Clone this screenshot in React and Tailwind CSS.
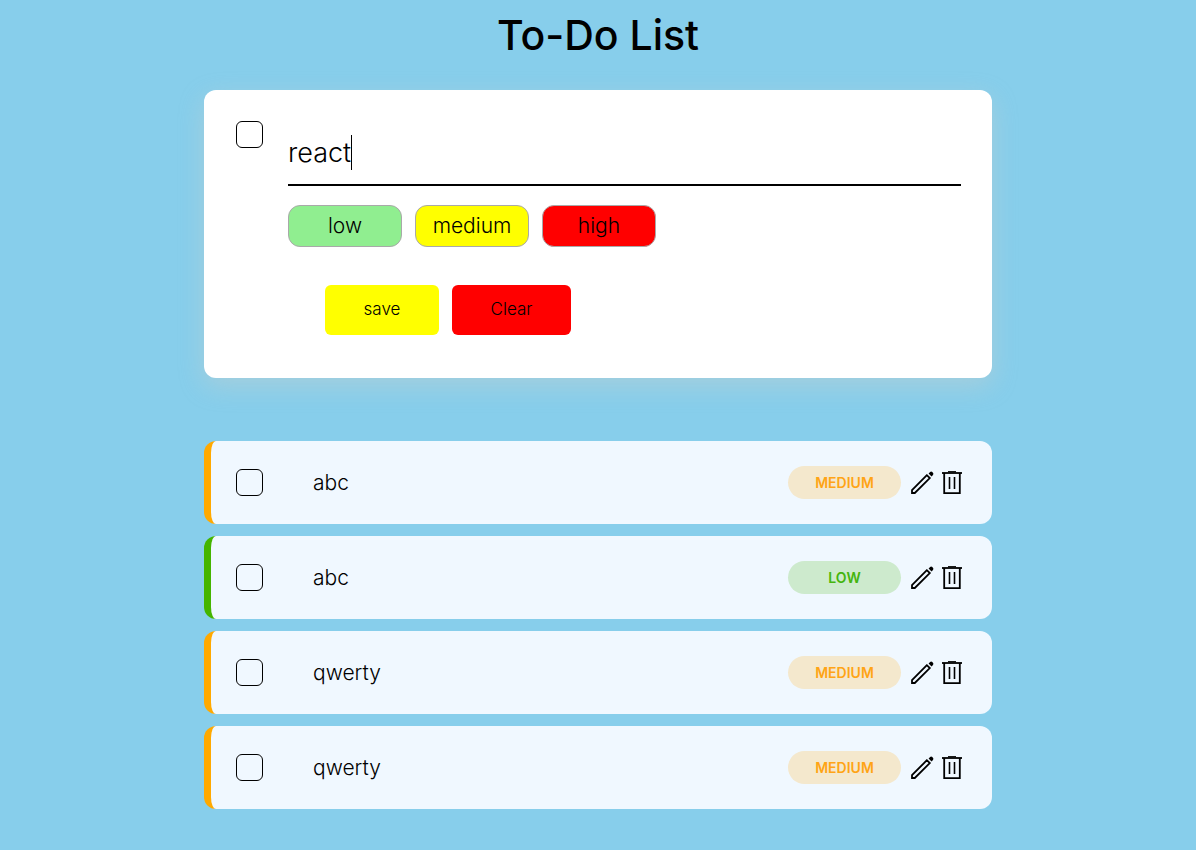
import { useState } from "react";

const tasks = [
  { id: 1, text: "abc", level: "medium" },
  { id: 2, text: "abc", level: "low" },
  { id: 3, text: "qwerty", level: "medium" },
  { id: 4, text: "qwerty", level: "medium" },
];

const borders = { medium: "border-[#ffa900]", low: "border-[#45b500]" };
const badges = {
  medium: "bg-[#f4e8cd] text-[#ffa415]",
  low: "bg-[#cdeacd] text-[#45b50e]",
};

function PencilIcon() {
  return (
    <svg width="24" height="24" viewBox="0 0 24 24" aria-hidden="true">
      <path d="M16.9 4.2 2 19.2V22H4.8L19.8 7.1Z" fill="none" stroke="#000" strokeWidth="1.8" />
      <path d="M18.6 2.5 20.1 1Q21.2 0.1 22.3 1.1L22.9 1.7Q23.9 2.8 23 3.9L21.5 5.4Z" fill="#000" />
    </svg>
  );
}

function TrashIcon() {
  return (
    <svg width="20" height="24" viewBox="0 0 20 24" aria-hidden="true">
      <path d="M0 2H20" stroke="#000" strokeWidth="1.8" fill="none" />
      <path d="M6 0.7H14" stroke="#000" strokeWidth="1.2" fill="none" />
      <path d="M2.2 2V22.1H17.8V2" stroke="#000" strokeWidth="1.8" fill="none" />
      <path d="M7.5 6V18M12.5 6V18" stroke="#000" strokeWidth="1.6" fill="none" />
    </svg>
  );
}

function Check({ label }) {
  return (
    <input
      type="checkbox"
      aria-label={label}
      className="size-[27px] shrink-0 appearance-none rounded-md border border-black bg-transparent checked:bg-black"
    />
  );
}

function Priority({ label, color }) {
  return (
    <button type="button" className={`h-[42px] w-[114px] rounded-xl border border-[#a9a9a9] text-[21px] font-light ${color}`}>
      {label}
    </button>
  );
}

export default function App() {
  const [draft, setDraft] = useState("react");
  return (
    <div className="min-h-screen bg-[#87ceeb] px-4 pb-10 font-['Inter',sans-serif] text-black">
      <main className="mx-auto w-full max-w-[788px]">
        <h1 className="pt-2 text-center text-[41px] leading-[54px] font-medium">To-Do List</h1>

        <form
          onSubmit={(e) => e.preventDefault()}
          className="mt-7 flex items-start gap-[25px] rounded-xl bg-white pt-[31px] pr-[31px] pb-[43px] pl-8 shadow-[0_8px_24px_rgba(210,208,200,0.4)]"
        >
          <Check label="Mark new task as done" />
          <div className="min-w-0 flex-1">
            <label className="flex h-[65px] cursor-text items-center border-b-2 border-black">
              <input
                type="text"
                aria-label="Task name"
                value={draft}
                onChange={(e) => setDraft(e.target.value)}
                className="field-sizing-content max-w-full text-[27px] leading-9 font-light caret-transparent outline-none"
              />
              <span className="h-[35px] w-px bg-black" />
            </label>
            <div className="mt-[19px] flex flex-wrap gap-[13px]">
              <Priority label="low" color="bg-[#90ee90]" />
              <Priority label="medium" color="bg-[#ffff00]" />
              <Priority label="high" color="bg-[#ff0000]" />
            </div>
            <div className="mt-[38px] flex flex-wrap gap-[13px] pl-[37px]">
              <button type="submit" className="h-[50px] w-[114px] rounded-md bg-[#ffff00] text-[17px] font-light">
                save
              </button>
              <button type="button" onClick={() => setDraft("")} className="h-[50px] w-[119px] rounded-md bg-[#ff0000] text-[17px] font-light">
                Clear
              </button>
            </div>
          </div>
        </form>

        <ul className="mt-[63px] flex flex-col gap-3">
          {tasks.map((task) => (
            <li
              key={task.id}
              className={`flex h-[83px] items-center rounded-xl border-l-[7px] bg-[#f0f8ff] pr-[30px] pl-[25px] ${borders[task.level]}`}
            >
              <Check label={`Mark ${task.text} as done`} />
              <span className="min-w-0 flex-1 truncate pl-[50px] text-[21px] font-light">{task.text}</span>
              <span className={`flex h-[33px] w-[113px] items-center justify-center rounded-full text-sm font-semibold uppercase ${badges[task.level]}`}>
                {task.level}
              </span>
              <button type="button" aria-label="Edit task" className="ml-[9px]">
                <PencilIcon />
              </button>
              <button type="button" aria-label="Delete task" className="ml-2">
                <TrashIcon />
              </button>
            </li>
          ))}
        </ul>
      </main>
    </div>
  );
}
